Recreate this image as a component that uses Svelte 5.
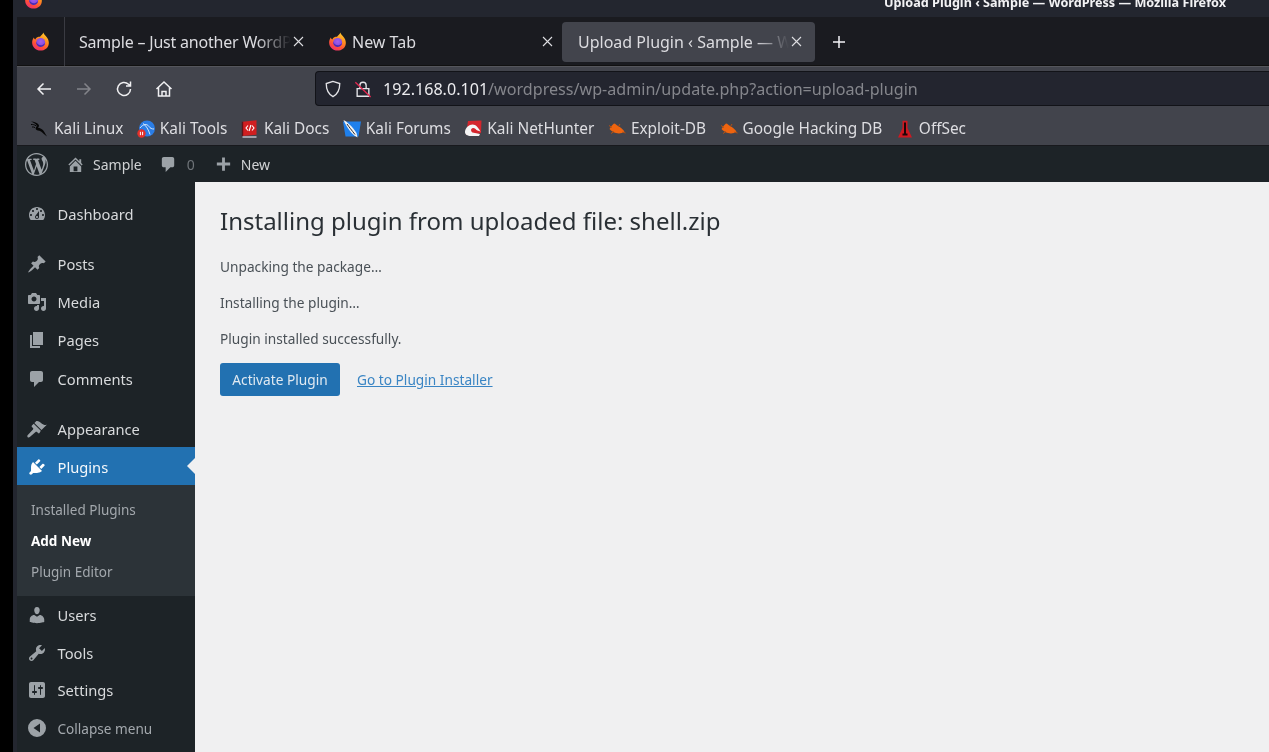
<script>
  const bookmarks = [
    { id: "kali", label: "Kali Linux" },
    { id: "tools", label: "Kali Tools" },
    { id: "docs", label: "Kali Docs" },
    { id: "forums", label: "Kali Forums" },
    { id: "hunter", label: "Kali NetHunter" },
    { id: "bug", label: "Exploit-DB" },
    { id: "bug", label: "Google Hacking DB" },
    { id: "offsec", label: "OffSec" },
  ];

  const icons = {
    dashboard: "M3.76 16h12.48c1.1-1.37 1.76-3.11 1.76-5 0-4.42-3.58-8-8-8s-8 3.58-8 8c0 1.89.66 3.63 1.76 5zM10 4c.55 0 1 .45 1 1s-.45 1-1 1-1-.45-1-1 .45-1 1-1zM6 6c.55 0 1 .45 1 1s-.45 1-1 1-1-.45-1-1 .45-1 1-1zm8 0c.55 0 1 .45 1 1s-.45 1-1 1-1-.45-1-1 .45-1 1-1zm-5.37 5.55L12 7v6c0 1.1-.9 2-2 2s-2-.9-2-2c0-.57.24-1.08.63-1.45zM4 10c.55 0 1 .45 1 1s-.45 1-1 1-1-.45-1-1 .45-1 1-1zm12 0c.55 0 1 .45 1 1s-.45 1-1 1-1-.45-1-1 .45-1 1-1zm-5 3c0-.55-.45-1-1-1s-1 .45-1 1 .45 1 1 1 1-.45 1-1z",
    pin: "M10.44 3.02l1.82-1.82 6.36 6.35-1.83 1.82c-1.05-.68-2.48-.57-3.41.36l-.75.75c-.92.93-1.04 2.35-.35 3.41l-1.83 1.82-2.41-2.41-2.8 2.79c-.42.42-3.38 2.71-3.8 2.29s1.86-3.39 2.28-3.81l2.79-2.79L4.1 9.36l1.83-1.82c1.05.69 2.48.57 3.4-.36l.75-.75c.93-.92 1.05-2.35.36-3.41z",
    media: "M13 11V4c0-.55-.45-1-1-1h-1.67L9 1H5L3.67 3H2c-.55 0-1 .45-1 1v7c0 .55.45 1 1 1h10c.55 0 1-.45 1-1zM7 4.5c1.38 0 2.5 1.12 2.5 2.5S8.38 9.5 7 9.5 4.5 8.38 4.5 7 5.62 4.5 7 4.5zM14 6h5v10.5c0 1.38-1.12 2.5-2.5 2.5S14 17.88 14 16.5s1.12-2.5 2.5-2.5c.17 0 .34.02.5.05V9h-3V6zm-4 8.05V13h2v3.5c0 1.38-1.12 2.5-2.5 2.5S7 17.88 7 16.5 8.12 14 9.5 14c.17 0 .34.02.5.05z",
    page: "M6 15V2h10v13H6zm-1 1h8v2H3V5h2v11z",
    comment: "M5 2h9c1.1 0 2 .9 2 2v7c0 1.1-.9 2-2 2h-2l-5 5v-5H5c-1.1 0-2-.9-2-2V4c0-1.1.9-2 2-2z",
    brush: "M14.5 11L7.4 4l1.5-1.5c.5-.6 2.3-.5 3.5.3 1.2.8 1.4 1.3 2.9 2.1 1.2.6 2.5 1.3 4.5.9zm-.7.8L6.7 4.7 4.9 6.5c-.4.4-.4 1 0 1.4L6 9c.4.4.4 1 0 1.4L.8 16.1c-.6.6-.7 1.5-.1 2.1s1.5.5 2.1-.1L8.6 13c.4-.4 1-.4 1.4 0l1.1 1.1c.4.4 1 .4 1.4 0z",
    plugin: "M13.11 4.36L9.87 7.6 8 5.73l3.24-3.24c.35-.34 1.05-.2 1.56.32.52.51.66 1.21.31 1.55zm-8 1.77l.91-1.12 9.01 9.01-1.19.84c-.71.71-2.63 1.16-3.82 1.16H6.14L4.9 17.26c-.59.59-1.54.59-2.12 0-.59-.58-.59-1.53 0-2.12l1.24-1.24v-3.88c0-1.13.4-3.19 1.09-3.89zm7.26 3.97l3.24-3.24c.34-.35 1.04-.21 1.55.31.52.51.66 1.21.31 1.55l-3.24 3.25z",
    users: "M10 9.25c-2.27 0-2.73-3.44-2.73-3.44C7 4.02 7.82 2 9.97 2c2.16 0 2.98 2.02 2.71 3.81 0 0-.41 3.44-2.68 3.44zm0 2.57L12.72 10c2.39 0 4.52 2.33 4.52 4.53v2.49s-3.65 1.13-7.24 1.13c-3.65 0-7.24-1.13-7.24-1.13v-2.49c0-2.25 1.94-4.48 4.47-4.48z",
    tools: "M16.68 9.77c-1.34 1.34-3.3 1.67-4.95.99l-5.41 6.52c-.99.99-2.59.99-3.58 0s-.99-2.59 0-3.57l6.52-5.42c-.68-1.65-.35-3.61.99-4.95 1.28-1.28 3.12-1.62 4.72-1.06l-2.89 2.89 2.82 2.82 2.86-2.87c.53 1.58.18 3.39-1.08 4.65zM3.81 16.21c.4.39 1.04.39 1.43 0 .4-.4.4-1.04 0-1.43-.39-.4-1.03-.4-1.43 0-.39.39-.39 1.03 0 1.43z",
    settings: "M18 16V4c0-1.1-.9-2-2-2H4c-1.1 0-2 .9-2 2v12c0 1.1.9 2 2 2h12c1.1 0 2-.9 2-2zM8 11h1c.55 0 1 .45 1 1s-.45 1-1 1H8v1.5c0 .28-.22.5-.5.5s-.5-.22-.5-.5V13H6c-.55 0-1-.45-1-1s.45-1 1-1h1V5.5c0-.28.22-.5.5-.5s.5.22.5.5V11zm5-2h-1c-.55 0-1-.45-1-1s.45-1 1-1h1V5.5c0-.28.22-.5.5-.5s.5.22.5.5V7h1c.55 0 1 .45 1 1s-.45 1-1 1h-1v5.5c0 .28-.22.5-.5.5s-.5-.22-.5-.5V9z",
    collapse: "M10 1a9 9 0 1 0 0 18 9 9 0 0 0 0-18zM13 5.5v9L6.5 10z",
    wp: "M20 10c0-5.51-4.49-10-10-10C4.48 0 0 4.49 0 10c0 5.52 4.48 10 10 10 5.51 0 10-4.48 10-10zM7.78 15.37L4.37 6.22c.55-.02 1.17-.08 1.17-.08.5-.06.44-1.13-.06-1.11 0 0-1.45.11-2.37.11-.18 0-.37 0-.58-.01C4.12 2.69 6.87 1.11 10 1.11c2.33 0 4.45.87 6.05 2.34-.68-.11-1.65.39-1.65 1.58 0 .74.45 1.36.9 2.1.35.61.55 1.36.55 2.46 0 1.49-1.4 5-1.4 5l-3.03-8.37c.54-.02.82-.17.82-.17.5-.05.44-1.25-.06-1.22 0 0-1.44.12-2.38.12-.87 0-2.33-.12-2.33-.12-.5-.03-.56 1.2-.06 1.22l.92.08 1.26 3.41zM17.41 10c.24-.64.74-1.87.43-4.25.7 1.29 1.05 2.71 1.05 4.25 0 3.29-1.73 6.24-4.4 7.78.97-2.59 1.94-5.2 2.92-7.78zM6.1 18.09C3.12 16.65 1.11 13.53 1.11 10c0-1.3.23-2.48.72-3.59C3.25 10.3 4.67 14.2 6.1 18.09zm4.03-6.63l2.58 6.98c-.86.29-1.76.45-2.71.45-.79 0-1.57-.11-2.29-.33.81-2.38 1.62-4.74 2.42-7.1z",
    home: "M16 8.5l1.53 1.53-1.06 1.06L10 4.62l-6.47 6.47-1.06-1.06L10 2.5l4 4v-2h2v4zm-6-2.46l6 5.99V18H4v-5.97zM12 17v-5H8v5h4z",
    plus: "M17 8v3h-5.5v5.5h-3V11H3V8h5.5V2.5h3V8z",
  };

  const menuTop = [
    { icon: "dashboard", label: "Dashboard", gap: true },
    { icon: "pin", label: "Posts" },
    { icon: "media", label: "Media" },
    { icon: "page", label: "Pages" },
    { icon: "comment", label: "Comments", gap: true },
    { icon: "brush", label: "Appearance" },
  ];
  const menuBottom = [
    { icon: "users", label: "Users" },
    { icon: "tools", label: "Tools" },
    { icon: "settings", label: "Settings" },
  ];
</script>

{#snippet firefox()}
  <svg class="fx" viewBox="0 0 20 20">
    <path d="M13 .5c.3 2.2 2.5 3 4 5.500 1.500 2.300 2 4.500 1.700 6.500-.6 4.300-4.300 7-8.700 7-4.800 0-8.800-3.700-8.800-8.500 0-1.800.5-3.700 1.800-5.300.2 1 .7 1.800 1.500 2.200C5.500 5.500 7.500 5 9.500 5 10.500 3.500 12.500 2.500 13 .5z" fill="url(#fxOuter)" />
    <circle cx="10.2" cy="11" r="4.700" fill="url(#fxInner)" />
    <path d="M5.500 10c.6 2.800 3.500 4.600 6.500 3.700 1.300-.4 2.200-1.200 2.800-2.300-.1 2.500-2.200 4.300-4.600 4.300-2.900 0-5-2.600-4.700-5.700z" fill="#4a2bb0" />
  </svg>
{/snippet}

{#snippet favicon(id)}
  <svg class="fav" viewBox="0 0 18 18">
    {#if id === "kali"}
      <path d="M0 1.500c3.500.2 6 1.300 7.500 3 .8 1 .6 2-.6 3.300 2.300.2 4.200 1.200 5.400 2.800.9 1.300 1.800 3 3.700 5.900-2.800-2-4.300-4-6-5-2-1.200-4.600-.9-5.300-2.500-.6-1.500 1.500-2.400 1-3.500C5.100 4 3 2.700 0 1.500z" fill="#060606" />
      <path d="M0 4.500c1.800-.2 3.500.2 5 1.300M1 7c1-.2 2 0 3 .6" stroke="#060606" stroke-width="1" fill="none" />
    {:else if id === "tools"}
      <circle cx="10" cy="8.500" r="8" fill="#2a7de6" />
      <path d="M3 8c3-4 7-4.500 9-1.500 1.200 1.800 2.800 2.600 5 2.500M6 3.500c3 2 5.500 6 7 11" stroke="#d5e8fc" stroke-width="1" fill="none" />
      <circle cx="4.500" cy="13.500" r="4.200" fill="#e3302a" />
      <path d="M3.400 11.800v3.400M5.600 11.800v3.400" stroke="#fff" stroke-width="1" />
    {:else if id === "docs"}
      <path d="M1.500 1.800 15.500.3v14.400l-14 1.300z" fill="#d01f20" />
      <path d="M1.500 1.800v14.400" stroke="#5c1418" stroke-width="1.400" />
      <path d="M1.500 17h14" stroke="#c9c9d1" stroke-width="1.400" />
      <path d="M7 5.500 5 8l2 2.500M11 5.500 13 8l-2 2.500M9.900 5 8.100 11" stroke="#fff" stroke-width="1.100" fill="none" />
    {:else if id === "forums"}
      <path d="M0 1.500h18l-2.500 15H2.500z" fill="#1f80ec" />
      <path d="M.5 0c3.500 1.500 9 6.800 13 13l1 4.500-3.500-2.200C7.500 12.500 3 6 .5 0z" fill="#f2f2f2" />
      <path d="M4 4c2 3 4.500 6 8 10.500" stroke="#2a2d33" stroke-width="1" fill="none" />
    {:else if id === "hunter"}
      <path d="M4 1 17.500.5 17 13 9 15H2z" fill="#d4252c" />
      <path d="M1 11.500C1.800 6.500 7 3 11 5c2 1 3.500 3.500 5.500 6.500-1-.2-2.200-.3-3-.9-1.300-1-2.800-2.900-4.500-2.700C6.500 8.200 6.500 11 8.500 12.500L16 14l-1 2H7c-3.500 0-6.300-1.500-6-4.500z" fill="#f4f4f4" />
    {:else if id === "bug"}
      <path d="M1.500 9C3 7 4 5 6 3.500c1.500 0 2.500 1.500 4 2.500 2.500 1.300 4.500 3 6.500 5.500-2.500 2-5.500 2.300-8.500 1.500C5.500 12.500 3.500 11 1.500 9z" fill="#ee640f" />
      <path d="M1 5.500l3 2M3 13.500l3-2M12 4l-1.500 2.500M17.500 13l-3-1" stroke="#b8500f" stroke-width="1" />
    {:else}
      <path d="M6.500 .8h5v7.200l4.500 9.500H2l4.500-9.500z" fill="#cf1820" />
      <path d="M9 2.500v11.500M6.500 14.500h5" stroke="#1e0508" stroke-width="2" />
    {/if}
  </svg>
{/snippet}

{#snippet dash(name, size = 20)}
  <svg class="dash" width={size} height={size} viewBox="0 0 20 20"><path d={icons[name]} /></svg>
{/snippet}

{#snippet cross()}
  <svg class="close" width="11" height="11" viewBox="0 0 11 11"><path d="M1 1l9 9M10 1l-9 9" stroke="#dedee2" stroke-width="1.100" /></svg>
{/snippet}

<svg class="defs" width="0" height="0" aria-hidden="true">
  <defs>
    <linearGradient id="fxOuter" x1="0.8" y1="0" x2="0.3" y2="1">
      <stop offset="0" stop-color="#ffd02e" />
      <stop offset="0.4" stop-color="#ff8f1f" />
      <stop offset="0.75" stop-color="#ff4d3a" />
      <stop offset="1" stop-color="#f0306e" />
    </linearGradient>
    <radialGradient id="fxInner" cx="0.5" cy="0.4" r="0.7">
      <stop offset="0" stop-color="#a55fe8" />
      <stop offset="1" stop-color="#7542e0" />
    </radialGradient>
  </defs>
</svg>

<div class="desktop">
  <div class="window">
    <header class="titlebar">
      <div class="title-icon">{@render firefox()}</div>
      <span class="title-text">Upload Plugin ‹ Sample — WordPress — Mozilla Firefox</span>
    </header>

    <div class="tabbar">
      <div class="view-btn">{@render firefox()}</div>
      <div class="tab first">
        <span class="tab-label fade">Sample – Just another WordPress</span>
        {@render cross()}
      </div>
      <div class="tab second">
        {@render firefox()}
        <span class="tab-label">New Tab</span>
        {@render cross()}
      </div>
      <div class="tab active">
        <span class="tab-label fade">Upload Plugin ‹ Sample — WordPress</span>
        {@render cross()}
      </div>
      <svg class="new-tab" width="16" height="16" viewBox="0 0 16 16"><path d="M8 2v12M2 8h12" stroke="#f4f4f6" stroke-width="1.500" /></svg>
    </div>

    <nav class="navbar">
      <div class="nav-btns">
        <svg viewBox="0 0 20 20"><path d="M17 10H4M9.500 4.500 4 10l5.500 5.500" /></svg>
        <svg class="off" viewBox="0 0 20 20"><path d="M3 10h13M10.500 4.500 16 10l-5.500 5.500" /></svg>
        <svg viewBox="0 0 20 20"><path d="M16.500 10a6.500 6.500 0 1 1-2-4.700L16.500 7M16.500 2.500V7H12" /></svg>
        <svg viewBox="0 0 20 20"><path d="M2.500 10 10 3l7.500 7M4.500 8.500V17h11V8.500M8 17v-4.500h4V17" /></svg>
      </div>
      <div class="urlbar">
        <svg class="url-icon" viewBox="0 0 20 20"><path d="M10 1.500 2.500 4c0 6.500 1.500 11.500 7.500 14.500 6-3 7.500-8 7.500-14.500z" fill="none" stroke="#e4e4e8" stroke-width="1.500" /></svg>
        <svg class="url-icon lock" viewBox="0 0 20 20">
          <path d="M6.500 9V6a3.500 3.500 0 0 1 7 0v3M3.500 9.500h13v8.500h-13z" fill="none" stroke="#e4e4e8" stroke-width="1.500" />
          <path d="M1.500 2.500 18.500 19" stroke="#e22850" stroke-width="1.500" />
        </svg>
        <span class="url"><span class="host">192.168.0.101</span>/wordpress/wp-admin/update.php?action=upload-plugin</span>
      </div>
    </nav>

    <div class="bookmarks">
      {#each bookmarks as b}
        <div class="bookmark">
          {@render favicon(b.id)}
          <span>{b.label}</span>
        </div>
      {/each}
    </div>

    <div class="adminbar">
      <span class="ab-logo">{@render dash("wp", 23)}</span>
      <span class="ab-item site">{@render dash("home", 19)}<span>Sample</span></span>
      <span class="ab-item comments">{@render dash("comment", 19)}<span class="count">0</span></span>
      <span class="ab-item new">{@render dash("plus", 19)}<span>New</span></span>
    </div>

    <div class="wp-body">
      <aside class="sidebar">
        <ul class="menu">
          {#each menuTop as item}
            <li class:gap={item.gap}>{@render dash(item.icon)}<span>{item.label}</span></li>
          {/each}
          <li class="current">{@render dash("plugin")}<span>Plugins</span></li>
        </ul>
        <ul class="submenu">
          <li>Installed Plugins</li>
          <li class="now">Add New</li>
          <li>Plugin Editor</li>
        </ul>
        <ul class="menu after">
          {#each menuBottom as item}
            <li>{@render dash(item.icon)}<span>{item.label}</span></li>
          {/each}
          <li class="collapse">{@render dash("collapse")}<span>Collapse menu</span></li>
        </ul>
      </aside>

      <main class="content">
        <h1>Installing plugin from uploaded file: shell.zip</h1>
        <p>Unpacking the package…</p>
        <p>Installing the plugin…</p>
        <p>Plugin installed successfully.</p>
        <div class="actions">
          <span class="button">Activate Plugin</span>
          <span class="link">Go to Plugin Installer</span>
        </div>
      </main>
    </div>
  </div>
</div>

<style>
  :global(body) {
    margin: 0;
    background: #000;
    overflow: hidden;
  }

  .defs {
    position: absolute;
  }

  .desktop {
    height: 752px;
    padding-left: 13px;
    font-family: "Noto Sans", "Open Sans", sans-serif;
    overflow: hidden;
    filter: blur(0.35px);
  }

  .window {
    display: flex;
    flex-direction: column;
    height: 100%;
    padding-left: 4px;
    background: #23262f;
  }

  .fx {
    width: 19px;
    height: 19px;
    flex: none;
  }

  .titlebar {
    display: flex;
    justify-content: space-between;
    height: 17px;
    flex: none;
    margin-left: -4px;
    padding: 0 43px 0 11px;
    overflow: hidden;
  }

  .title-icon {
    margin-top: -10px;
  }

  .title-text {
    margin-top: -6px;
    color: #f2f2f4;
    font-size: 12.65px;
    line-height: 16px;
    font-weight: 700;
  }

  .tabbar {
    display: flex;
    align-items: center;
    height: 49px;
    flex: none;
    background: #1a1b20;
    color: #dcdce0;
    font-size: 16px;
    box-shadow: inset 0 -1px 0 #111;
  }

  .view-btn {
    display: flex;
    align-items: center;
    justify-content: center;
    width: 48px;
    height: 100%;
    border-right: 1px solid #3a3b42;
    box-sizing: border-box;
  }

  .tab {
    display: flex;
    align-items: center;
    height: 40px;
    box-sizing: border-box;
    border-radius: 4px;
  }

  .tab-label {
    white-space: nowrap;
    overflow: hidden;
  }

  .fade {
    mask-image: linear-gradient(to right, #000 84%, transparent 100%);
  }

  .first {
    width: 249px;
    padding-left: 14px;
  }

  .first .tab-label {
    width: 212px;
    letter-spacing: -0.2px;
  }

  .second {
    width: 248px;
    padding-left: 14px;
    gap: 5px;
  }

  .second .tab-label {
    width: 183px;
  }

  .active {
    width: 253px;
    padding-left: 16px;
    background: #42444c;
  }

  .active .tab-label {
    width: 211px;
  }

  .close {
    flex: none;
    margin-left: 2px;
  }

  .new-tab {
    margin-left: 16px;
  }

  .navbar {
    display: flex;
    align-items: center;
    height: 40px;
    box-sizing: border-box;
    flex: none;
    padding-top: 5px;
    background: #42444c;
    box-shadow: inset 0 1px 0 #55565c;
  }

  .nav-btns {
    display: flex;
    gap: 20px;
    width: 298px;
    padding-left: 17px;
    box-sizing: border-box;
  }

  .nav-btns svg {
    width: 20px;
    height: 20px;
    fill: none;
    stroke: #f0f0f2;
    stroke-width: 1.5;
  }

  .nav-btns .off {
    stroke: #83848a;
  }

  .urlbar {
    display: flex;
    align-items: center;
    flex: 1;
    height: 35px;
    box-sizing: border-box;
    padding-left: 8px;
    background: #23252f;
    border: 1px solid #121318;
    border-right: 0;
    border-radius: 4px 0 0 4px;
  }

  .url-icon {
    width: 18px;
    height: 18px;
  }

  .lock {
    margin-left: 12px;
  }

  .url {
    margin-left: 11px;
    color: #85868c;
    font-size: 16.12px;
    white-space: nowrap;
  }

  .host {
    color: #ececef;
  }

  .bookmarks {
    display: flex;
    align-items: center;
    gap: 13.5px;
    height: 40px;
    box-sizing: border-box;
    flex: none;
    padding: 5px 0 0 14px;
    background: #42444c;
    color: #dedee2;
    font-size: 15.4px;
    box-shadow: inset 0 -1px 0 #18191d;
  }

  .bookmark {
    display: flex;
    align-items: center;
    gap: 5px;
  }

  .fav {
    width: 18px;
    height: 18px;
    flex: none;
  }

  .dash {
    fill: #9ca2a7;
    flex: none;
  }

  .adminbar {
    display: flex;
    align-items: center;
    height: 36px;
    flex: none;
    background: #1d2327;
    color: #d0d2d4;
    font-size: 14px;
  }

  .ab-logo {
    display: flex;
    margin-left: 8px;
  }

  .ab-item {
    display: flex;
    align-items: center;
  }

  .site {
    margin-left: 18px;
    gap: 8px;
  }

  .comments {
    margin-left: 17px;
    gap: 9px;
  }

  .count {
    color: #6f7479;
  }

  .new {
    margin-left: 19px;
    gap: 8px;
  }

  .wp-body {
    display: flex;
    flex: 1;
    min-height: 0;
  }

  .sidebar {
    width: 178px;
    flex: none;
    padding-top: 12px;
    background: #1d2327;
    color: #d8dadc;
    font-size: 14.7px;
  }

  ul {
    list-style: none;
    margin: 0;
    padding: 0;
  }

  .menu li {
    display: flex;
    align-items: center;
    gap: 10.5px;
    height: 38.2px;
    box-sizing: border-box;
    padding: 1.5px 0 0 10px;
  }

  .menu li.gap {
    margin-bottom: 12px;
  }

  .menu .current {
    position: relative;
    background: #2271b1;
    color: #f4f8fb;
  }

  .current .dash {
    fill: #fff;
  }

  .current::after {
    content: "";
    position: absolute;
    right: 0;
    top: 11px;
    border: 8px solid transparent;
    border-right-color: #f0f0f1;
    border-left: 0;
  }

  .submenu {
    height: 111px;
    box-sizing: border-box;
    padding-top: 10px;
    background: #2c3338;
    color: #a3a8ad;
    font-size: 13.5px;
  }

  .submenu li {
    height: 31px;
    line-height: 31px;
    padding-left: 14px;
  }

  .submenu .now {
    color: #fff;
    font-weight: 700;
  }

  .menu.after li {
    height: 37.8px;
    padding: 0 0 1px 10px;
  }

  .menu .collapse {
    color: #a3a8ad;
    font-size: 13.6px;
  }

  .content {
    flex: 1;
    padding: 0 25px;
    background: #f0f0f1;
    color: #4a5157;
    font-size: 13.7px;
  }

  h1 {
    margin: 23px 0 0;
    color: #2a3035;
    font-size: 24px;
    line-height: 32px;
    font-weight: 400;
  }

  p {
    margin: 16px 0 0;
    line-height: 20px;
  }

  h1 + p {
    margin-top: 20px;
  }

  .actions {
    display: flex;
    align-items: center;
    gap: 17px;
    margin-top: 14px;
  }

  .button {
    display: block;
    width: 120px;
    height: 33px;
    box-sizing: border-box;
    background: #2271b1;
    border-radius: 3px;
    color: #e0e9f1;
    text-align: center;
    line-height: 33px;
  }

  .link {
    color: #3a85c4;
    text-decoration: underline;
  }
</style>
